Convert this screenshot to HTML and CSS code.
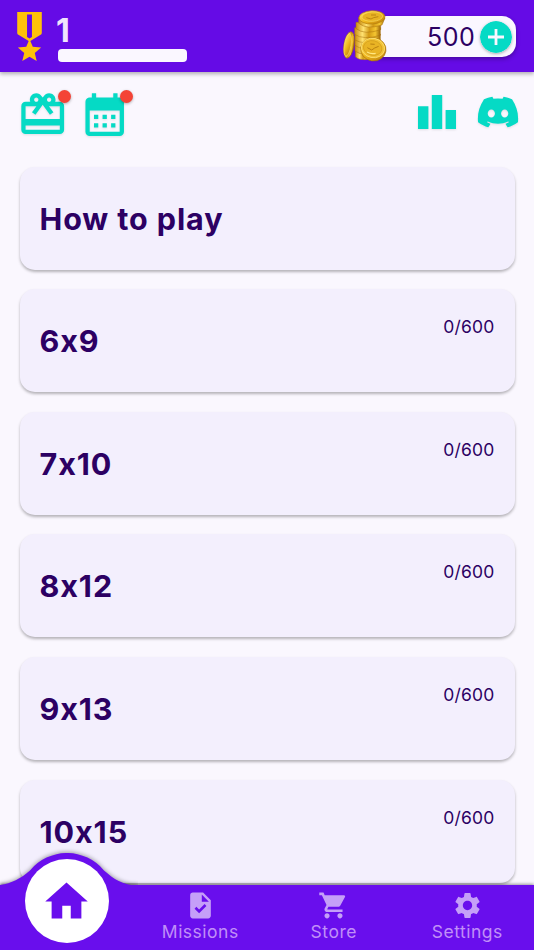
FILE: index.html
```html
<!DOCTYPE html>
<html lang="en">
  <head>
    <meta charset="UTF-8" />
    <meta name="viewport" content="width=device-width, initial-scale=1.0" />
    <title>Home</title>
    <link rel="stylesheet" href="styles.css">
  </head>
  <body>
    <header class="header">
      <div class="level">
        <svg class="medal" viewBox="0 0 24 24">
          <path d="M17 10.43V2H7v8.43c0 .35.18.68.49.86l4.18 2.51-.99 2.34-3.41.29 2.59 2.24L9.07 22 12 20.23 14.93 22l-.78-3.33 2.59-2.24-3.41-.29-.99-2.34 4.18-2.51c.3-.18.48-.5.48-.86zM13 12.23l-1 .6-1-.6V3h2v9.23z" />
        </svg>
        <div class="level-info">
          <span class="level-number">1</span>
          <div class="level-bar"></div>
        </div>
      </div>
      <div class="wallet">
        <svg class="coins" viewBox="0 0 180 186">
          <defs>
            <linearGradient id="gold" x1="0" y1="0" x2="1" y2="1">
              <stop offset="0" stop-color="#ffe66a" />
              <stop offset="0.5" stop-color="#f0b81d" />
              <stop offset="1" stop-color="#b87908" />
            </linearGradient>
            <linearGradient id="edge" x1="0" y1="0" x2="1" y2="0">
              <stop offset="0" stop-color="#c98d10" />
              <stop offset="0.3" stop-color="#ffe272" />
              <stop offset="0.55" stop-color="#d39a14" />
              <stop offset="0.8" stop-color="#f5c631" />
              <stop offset="1" stop-color="#9a640a" />
            </linearGradient>
          </defs>
          <g fill="url(#edge)" stroke="#a8700c" stroke-width="1.5">
            <path d="M61 134v18q10 12 42 8v-26z" />
            <path d="M60 117v18q22 18 72 2v-18z" />
            <path d="M60 100v18q22 18 70 2v-18z" />
            <path d="M60 84v18q26 16 76 0V84z" />
            <path d="M59 65v20q26 18 77 3V65z" />
            <path d="M63 49v19q25 20 74 3V50z" />
            <path d="M71 34v18q24 20 70 5l9-21z" />
          </g>
          <ellipse cx="111" cy="34" rx="39" ry="20" transform="rotate(-3 111 34)" fill="url(#gold)" stroke="#b57d0c" stroke-width="2" />
          <ellipse cx="112" cy="32" rx="31" ry="14" transform="rotate(-3 112 32)" fill="#e8b323" stroke="#f9da62" stroke-width="2" />
          <path d="M94 35l14 4 8-4 14-3M108 27l15 0" fill="none" stroke="#bd8412" stroke-width="3" />
          <ellipse cx="42" cy="117" rx="15" ry="40" transform="rotate(9 42 117)" fill="url(#edge)" stroke="#a36c0a" stroke-width="2" />
          <ellipse cx="38" cy="117" rx="10" ry="34" transform="rotate(9 38 117)" fill="url(#gold)" stroke="#f9da62" stroke-width="2" />
          <ellipse cx="115" cy="130" rx="38" ry="35" transform="rotate(8 115 130)" fill="url(#gold)" stroke="#a36c0a" stroke-width="2" />
          <ellipse cx="114" cy="126" rx="35" ry="29" transform="rotate(12 114 126)" fill="#f2c235" stroke="#ffe783" stroke-width="2" />
          <ellipse cx="113" cy="126" rx="28" ry="22" transform="rotate(12 113 126)" fill="#e9b425" stroke="#d09a1a" stroke-width="2" />
          <path d="M97 125l13 7 9-6 12-5M106 114l13 1" fill="none" stroke="#b98111" stroke-width="3" />
          <path d="M96 138q12 7 26 4" fill="none" stroke="#ffe783" stroke-width="4" />
        </svg>
        <span class="wallet-amount">500</span>
        <svg class="wallet-add" viewBox="0 0 32 32">
          <circle cx="16" cy="16" r="16" fill="#05dac5" />
          <path d="M16 8v16M8 16h16" stroke="#faf7ff" stroke-width="2.8" />
        </svg>
      </div>
    </header>

    <div class="toolbar">
      <div class="tool">
        <svg class="tool-icon" viewBox="0 0 24 24">
          <path d="M20 6h-2.18c.11-.31.18-.65.18-1 0-1.66-1.34-3-3-3-1.05 0-1.96.54-2.5 1.35l-.5.67-.5-.68C10.96 2.54 10.05 2 9 2 7.34 2 6 3.34 6 5c0 .35.07.69.18 1H4c-1.11 0-1.99.89-1.99 2L2 19c0 1.11.89 2 2 2h16c1.11 0 2-.89 2-2V8c0-1.11-.89-2-2-2zm-5-2c.55 0 1 .45 1 1s-.45 1-1 1-1-.45-1-1 .45-1 1-1zM9 4c.55 0 1 .45 1 1s-.45 1-1 1-1-.45-1-1 .45-1 1-1zm11 15H4v-2h16v2zm0-5H4V8h5.08L7 10.83 8.62 12 11 8.76l1-1.36 1 1.36L15.38 12 17 10.83 14.92 8H20v6z" />
        </svg>
        <span class="dot"></span>
      </div>
      <div class="tool">
        <svg class="tool-icon" viewBox="0 0 24 24">
          <path d="M19 4h-1V2h-2v2H8V2H6v2H5c-1.11 0-1.99.9-1.99 2L3 20c0 1.1.89 2 2 2h14c1.1 0 2-.9 2-2V6c0-1.1-.9-2-2-2zm0 16H5V10h14v10zM9 14H7v-2h2v2zm4 0h-2v-2h2v2zm4 0h-2v-2h2v2zm-8 4H7v-2h2v2zm4 0h-2v-2h2v2zm4 0h-2v-2h2v2z" />
        </svg>
        <span class="dot"></span>
      </div>
      <svg class="chart-icon" viewBox="0 0 38 34">
        <path d="M0 11.3h10.4V34H0zM13.8 0h10.4v34H13.8zM27.6 15H38v19H27.6z" />
      </svg>
      <svg class="discord-icon" viewBox="0 0 24 24">
        <path d="M19.27 5.33C17.94 4.71 16.5 4.26 15 4a.09.09 0 0 0-.07.03c-.18.33-.39.76-.53 1.09a16.09 16.09 0 0 0-4.8 0c-.14-.34-.35-.76-.54-1.09c-.01-.02-.04-.03-.07-.03c-1.5.26-2.93.71-4.27 1.33c-.01 0-.02.01-.03.02c-2.72 4.07-3.47 8.03-3.1 11.95c0 .02.01.04.03.05c1.8 1.32 3.53 2.12 5.24 2.65c.03.01.06 0 .07-.02c.4-.55.76-1.13 1.07-1.74c.02-.04 0-.08-.04-.09c-.57-.22-1.11-.48-1.64-.78c-.04-.02-.04-.08-.01-.11c.11-.08.22-.17.33-.25c.02-.02.05-.02.07-.01c3.44 1.57 7.15 1.57 10.55 0c.02-.01.05-.01.07.01c.11.09.22.17.33.26c.04.03.04.09-.01.11c-.52.31-1.07.56-1.64.78c-.04.01-.05.06-.04.09c.32.61.68 1.19 1.07 1.74c.03.01.06.02.09.01c1.72-.53 3.45-1.33 5.25-2.65c.02-.01.03-.03.03-.05c.44-4.53-.73-8.46-3.1-11.95c-.01-.01-.02-.02-.04-.02zM8.52 14.91c-1.03 0-1.89-.95-1.89-2.12s.84-2.12 1.89-2.12c1.06 0 1.9.96 1.89 2.12c0 1.17-.84 2.12-1.89 2.12zm6.97 0c-1.03 0-1.89-.95-1.89-2.12s.84-2.12 1.89-2.12c1.06 0 1.9.96 1.89 2.12c0 1.17-.83 2.12-1.89 2.12z" />
      </svg>
    </div>

    <main class="levels">
      <div class="card"><span class="card-title">How to play</span></div>
      <div class="card">
        <span class="card-title">6x9</span>
        <span class="card-score">0/600</span>
      </div>
      <div class="card">
        <span class="card-title">7x10</span>
        <span class="card-score">0/600</span>
      </div>
      <div class="card">
        <span class="card-title">8x12</span>
        <span class="card-score">0/600</span>
      </div>
      <div class="card">
        <span class="card-title">9x13</span>
        <span class="card-score">0/600</span>
      </div>
      <div class="card">
        <span class="card-title">10x15</span>
        <span class="card-score">0/600</span>
      </div>
    </main>

    <nav class="nav">
      <!-- raised part of the bar behind the active tab -->
      <svg class="nav-bump" viewBox="0 0 138 36">
        <path d="M0 36V32C12 30 20 26 30 17.4A48 48 0 0 1 104 17.4C114 26 122 32 138 32.5V36z" />
      </svg>
      <div class="nav-item">
        <div class="nav-active">
          <svg class="home-icon" viewBox="0 0 24 24">
            <path d="M10 20v-6h4v6h5v-8h3L12 3 2 12h3v8z" />
          </svg>
        </div>
      </div>
      <div class="nav-item">
        <svg class="nav-icon" viewBox="0 0 24 24">
          <path d="M14 2H6c-1.1 0-1.99.9-1.99 2L4 20c0 1.1.89 2 1.99 2H18c1.1 0 2-.9 2-2V8l-6-6zm-3.06 16L7.4 14.46l1.41-1.41 2.12 2.12 4.24-4.24 1.41 1.41L10.94 18zM13 9V3.5L18.5 9H13z" />
        </svg>
        <span class="nav-label">Missions</span>
      </div>
      <div class="nav-item">
        <svg class="nav-icon" viewBox="0 0 24 24">
          <path d="M7 18c-1.1 0-1.99.9-1.99 2S5.9 22 7 22s2-.9 2-2-.9-2-2-2zM1 2v2h2l3.6 7.59-1.35 2.45c-.16.28-.25.61-.25.96 0 1.1.9 2 2 2h12v-2H7.42c-.14 0-.25-.11-.25-.25l.03-.12.9-1.63h7.45c.75 0 1.41-.41 1.75-1.03l3.58-6.49c.08-.14.12-.31.12-.48 0-.55-.45-1-1-1H5.21l-.94-2H1zm16 16c-1.1 0-1.99.9-1.99 2s.89 2 1.99 2 2-.9 2-2-.9-2-2-2z" />
        </svg>
        <span class="nav-label">Store</span>
      </div>
      <div class="nav-item">
        <svg class="nav-icon" viewBox="0 0 24 24">
          <path d="M19.14 12.94c.04-.3.06-.61.06-.94 0-.32-.02-.64-.07-.94l2.03-1.58c.18-.14.23-.41.12-.61l-1.92-3.32c-.12-.22-.37-.29-.59-.22l-2.39.96c-.5-.38-1.03-.7-1.62-.94l-.36-2.54c-.04-.24-.24-.41-.48-.41h-3.84c-.24 0-.43.17-.47.41l-.36 2.54c-.59.24-1.13.57-1.62.94l-2.39-.96c-.22-.08-.47 0-.59.22L2.74 8.87c-.12.21-.08.47.12.61l2.03 1.58c-.05.3-.09.63-.09.94s.02.64.07.94l-2.03 1.58c-.18.14-.23.41-.12.61l1.92 3.32c.12.22.37.29.59.22l2.39-.96c.5.38 1.03.7 1.62.94l.36 2.54c.05.24.24.41.48.41h3.84c.24 0 .44-.17.47-.41l.36-2.54c.59-.24 1.13-.56 1.62-.94l2.39.96c.22.08.47 0 .59-.22l1.92-3.32c.12-.22.07-.47-.12-.61l-2.01-1.58zM12 15.6c-1.98 0-3.6-1.62-3.6-3.6s1.62-3.6 3.6-3.6 3.6 1.62 3.6 3.6-1.62 3.6-3.6 3.6z" />
        </svg>
        <span class="nav-label">Settings</span>
      </div>
    </nav>
  </body>
</html>
```
FILE: styles.css
```css
* {
  box-sizing: border-box;
}
body {
  margin: 0;
  height: 100vh;
  display: flex;
  flex-direction: column;
  overflow: hidden;
  background-color: #faf7fe;
  color: #2c0063;
  font-family: Inter, sans-serif;
}
svg {
  display: block;
  flex-shrink: 0;
}
.header {
  flex: 0 0 72px;
  display: flex;
  justify-content: space-between;
  background-color: #650be6;
  box-shadow: 0 2px 4px rgba(0, 0, 0, 0.3);
}
.level {
  display: flex;
}
.medal {
  width: 59px;
  height: 59px;
  margin-top: 7px;
  fill: #ffc10a;
}
.level-info {
  display: flex;
  flex-direction: column;
  padding-top: 12px;
  margin-left: -1px;
}
.level-number {
  height: 36px;
  line-height: 37px;
  font-size: 32px;
  font-weight: 700;
  color: #f0e5fd;
  margin-left: -2px;
}
.level-bar {
  width: 129px;
  height: 13px;
  margin-top: 0.6px;
  border-radius: 4px;
  background-color: #faf7ff;
}
.wallet {
  display: flex;
  align-items: center;
  width: 152px;
  height: 41px;
  margin: 16px 18.5px 0 0;
  padding-right: 4px;
  border-radius: 14px;
  background-color: #faf7ff;
  box-shadow: 0 2px 4px rgba(0, 0, 0, 0.3);
}
.coins {
  width: 60px;
  height: 62px;
  margin-left: -29px;
}
.wallet-amount {
  margin-left: auto;
  font-size: 25px;
  letter-spacing: 0.6px;
}
.wallet-add {
  width: 32px;
  height: 32px;
  margin-left: 4px;
  border-radius: 50%;
  box-shadow: 0 1px 3px rgba(0, 0, 0, 0.3);
}
.toolbar {
  flex: 0 0 94.6px;
  display: flex;
  align-items: flex-start;
  padding: 17px 13px 0 17px;
  gap: 10.5px;
  fill: #05dac5;
}
.tool {
  position: relative;
}
.tool-icon {
  width: 51.4px;
  height: 51.4px;
  filter: drop-shadow(0 1px 1px rgba(0, 0, 0, 0.1));
}
.dot {
  position: absolute;
  top: 1px;
  right: -3px;
  width: 13px;
  height: 13px;
  border-radius: 50%;
  background-color: #f44336;
  box-shadow: 0 1px 3px rgba(0, 0, 0, 0.3);
}
.chart-icon {
  width: 38px;
  height: 34px;
  margin: 6px 0 0 auto;
  filter: drop-shadow(0 1px 1px rgba(0, 0, 0, 0.1));
}
.discord-icon {
  width: 46px;
  height: 46px;
  margin-left: 9px;
  filter: drop-shadow(0 1px 1px rgba(0, 0, 0, 0.1));
}
.levels {
  flex: 1;
  min-height: 0;
  display: flex;
  flex-direction: column;
  gap: 19.6px;
  padding: 0 19.5px;
}
.card {
  flex: 0 0 103px;
  display: flex;
  justify-content: space-between;
  align-items: center;
  padding: 0 20px;
  border-radius: 15px;
  background-color: #f3effd;
  box-shadow: 0 2px 3px rgba(0, 0, 0, 0.28);
}
.card-title {
  font-size: 30.5px;
  font-weight: 700;
  letter-spacing: 0.9px;
}
.card-score {
  align-self: flex-start;
  margin-top: 27px;
  font-size: 17.5px;
  letter-spacing: 0.2px;
}
.nav {
  position: relative;
  flex: 0 0 65px;
  display: flex;
  background-color: #690eed;
  box-shadow: 0 -1px 3px rgba(0, 0, 0, 0.4);
}
.nav-bump {
  position: absolute;
  left: 0;
  top: -32px;
  width: 138px;
  height: 36px;
  fill: #690eed;
  filter: drop-shadow(0 -1px 2px rgba(0, 0, 0, 0.35));
  clip-path: inset(-8px 0 4px 0);
}
.nav-item {
  position: relative;
  flex: 1;
  display: flex;
  flex-direction: column;
  align-items: center;
  padding-top: 5px;
}
.nav-active {
  flex-shrink: 0;
  width: 84px;
  height: 84px;
  margin-top: -31px;
  display: flex;
  justify-content: center;
  align-items: center;
  border-radius: 50%;
  background-color: #fff;
}
.home-icon {
  width: 51px;
  height: 51px;
  fill: #690eed;
}
.nav-icon {
  width: 31px;
  height: 31px;
  fill: #c59ff8;
}
.nav-label {
  font-size: 17.5px;
  line-height: 22px;
  letter-spacing: 0.5px;
  color: #c08ff8;
}
```
